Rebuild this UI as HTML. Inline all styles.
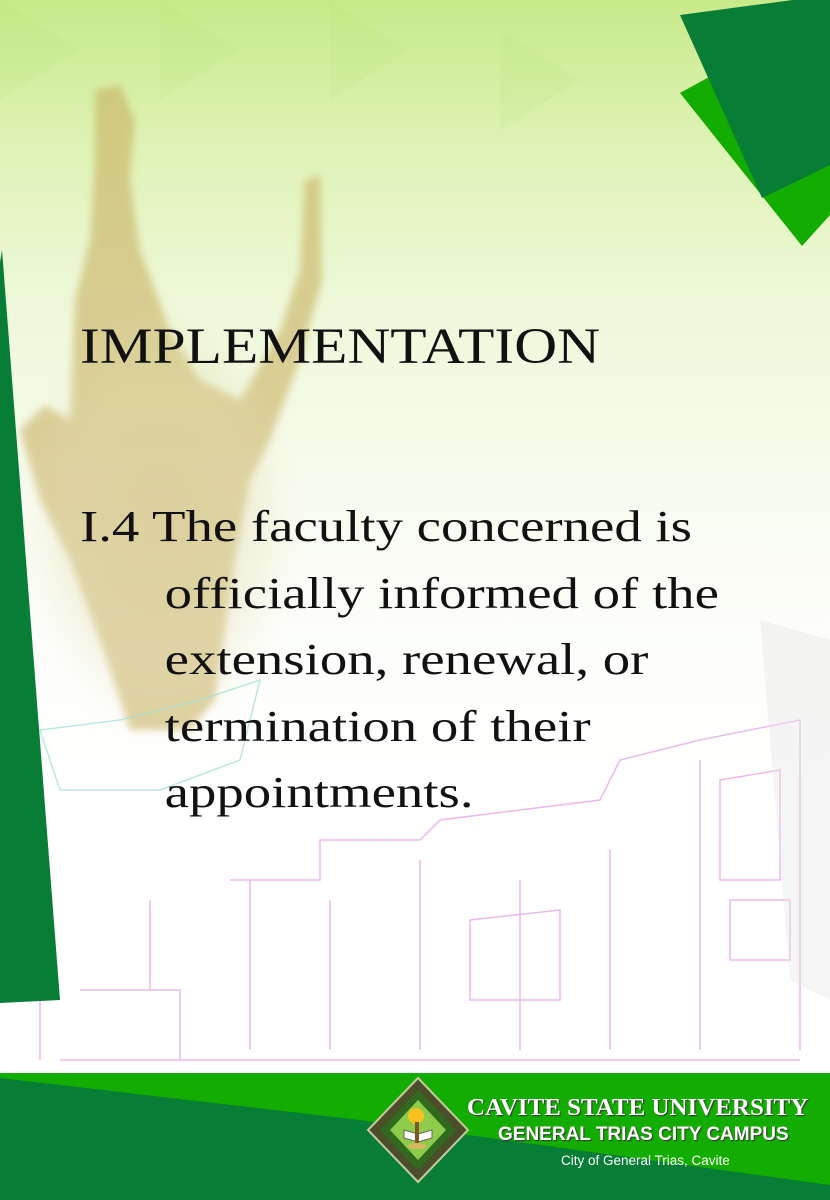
<!DOCTYPE html>
<html><head><meta charset="utf-8"><style>
html,body{margin:0;padding:0}
body{width:830px;height:1200px;position:relative;overflow:hidden;background:#fff;font-family:"Liberation Serif",serif}
.bg{position:absolute;inset:0;background:linear-gradient(180deg,#c8e98a 0%,#def3b5 12%,#eef8d8 25%,#f7fbee 40%,#fdfefb 55%,#fff 70%)}
svg{position:absolute;left:0;top:0}
.t{position:absolute;color:#111;white-space:nowrap;transform-origin:0 0}
</style></head><body>
<div class="bg"></div>
<svg width="830" height="1200" viewBox="0 0 830 1200">
<defs>
<radialGradient id="st" cx="0.5" cy="0.5" r="0.5">
<stop offset="0" stop-color="#c9b66a" stop-opacity="0.6"/>
<stop offset="0.7" stop-color="#d6c98a" stop-opacity="0.3"/>
<stop offset="1" stop-color="#e0d8a0" stop-opacity="0"/>
</radialGradient>
<filter id="bl"><feGaussianBlur stdDeviation="4"/></filter>
</defs>
<g opacity="0.12" fill="#b6dc6a">
<polygon points="0,0 80,50 0,100"/><polygon points="160,0 240,50 160,100"/><polygon points="330,0 410,50 330,100"/><polygon points="500,30 580,80 500,130"/>
</g>
<!-- statue -->
<g filter="url(#bl)" opacity="0.6">
<path d="M95,90 L120,85 L135,120 L130,180 L140,250 L170,330 L200,380 L240,400 L280,330 L300,270 L305,180 L320,175 L322,280 L300,360 L270,440 L250,480 L235,560 L215,700 L190,730 L130,730 L100,640 L70,560 L40,500 L20,430 L45,405 L70,420 L75,300 L90,240 L95,160 Z" fill="#c8b060"/>
<ellipse cx="160" cy="520" rx="140" ry="220" fill="url(#st)"/>
</g>
<g fill="none" stroke="#e9a6e6" stroke-width="1.5" opacity="0.8">
<path d="M230,880 L320,880 L320,840 L420,840 L440,820 L600,800 L620,760 L700,740 L800,720 L800,1050 M250,880 L250,1050 M330,900 L330,1050 M420,860 L420,1050 M520,880 L520,1050 M610,850 L610,1050 M700,760 L700,1050 M40,1000 L40,1060 M80,990 L180,990 L180,1060 M150,900 L150,990 M60,1060 L800,1060"/>
<path d="M470,920 L560,910 L560,1000 L470,1000 Z M720,780 L780,770 L780,880 L720,880 Z M730,900 L790,900 L790,960 L730,960 Z"/>
</g>
<g fill="none" stroke="#9fe0d8" stroke-width="1.5" opacity="0.7">
<path d="M40,730 L120,720 L200,700 L260,680 L240,760 L160,790 L60,790 Z"/>
</g>
<path d="M760,620 L830,640 L830,1000 L790,980 Z" fill="#e5e5e5" opacity="0.4"/>
<polygon points="680,93 802,246 830,215 830,150 740,60" fill="#13ac00"/>
<polygon points="680,15 830,-5 830,165 762,198" fill="#087d35"/>
<polygon points="0,262 2,250 60,1000 0,1003" fill="#087d35"/>
<rect x="0" y="1066" width="830" height="4" fill="#fff"/>
<polygon points="0,1073 830,1073 830,1200 0,1200" fill="#087d35"/>
<polygon points="0,1073 830,1073 830,1185 360,1120 0,1078" fill="#13ac00"/>
<g transform="translate(418,1130)">
<polygon points="0,-52 50,0 0,52 -50,0" fill="#4a4f2a" stroke="#c8c8a0" stroke-width="2"/>
<polygon points="0,-40 38,0 0,40 -38,0" fill="#2f6a1e"/>
<polygon points="0,-30 28,0 0,30 -28,0" fill="#8ecb4a"/>
<circle cx="-2" cy="-14" r="8" fill="#f5c020"/>
<path d="M-14,0 L0,4 L14,0 L14,8 L0,12 L-14,8 Z" fill="#fff" stroke="#665" stroke-width="1"/>
<rect x="-3" y="-8" width="4" height="22" fill="#7a5a20"/>
<ellipse cx="-1" cy="16" rx="9" ry="3" fill="#d8b860"/>
</g>
</svg>
<div class="t" style="left:80px;top:318px;font-size:51px;transform:scaleX(1.165)">IMPLEMENTATION</div>
<div class="t" style="left:80px;top:494px;font-size:44px;line-height:66.5px;transform:scaleX(1.245)">I.4 The faculty concerned is<br><span style="padding-left:68px">officially informed of the</span><br><span style="padding-left:68px">extension, renewal, or</span><br><span style="padding-left:68px">termination of their</span><br><span style="padding-left:68px">appointments.</span></div>
<div class="t" style="left:467px;top:1095px;font-size:24px;font-weight:bold;color:#fff;text-shadow:1px 1px 1px #333;transform:scaleX(1.04)">CAVITE STATE UNIVERSITY</div>
<div class="t" style="left:498px;top:1124px;font-family:'Liberation Sans',sans-serif;font-size:19px;font-weight:bold;color:#fff;text-shadow:1px 1px 1px #333">GENERAL TRIAS CITY CAMPUS</div>
<div class="t" style="left:561px;top:1153px;font-family:'Liberation Sans',sans-serif;font-size:13.5px;color:#fff">City of General Trias, Cavite</div>
</body></html>
